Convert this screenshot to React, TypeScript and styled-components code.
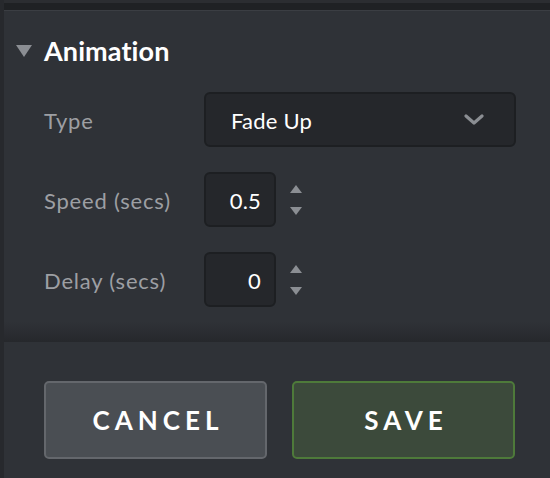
import React from "react";
import styled, { createGlobalStyle } from "styled-components";

const GlobalStyle = createGlobalStyle`
  html, body {
    margin: 0;
    padding: 0;
    background: #2f3237;
    font-family: Lato, "Open Sans", "Liberation Sans", sans-serif;
  }
`;

const Page = styled.div`
  display: flex;
  width: 550px;
  height: 478px;
  overflow: hidden;
  background: #2f3237;
`;

const SideStrip = styled.div`
  width: 4px;
  flex: none;
  background: #27292d;
`;

const Main = styled.div`
  flex: 1;
  display: flex;
  flex-direction: column;
`;

const TopBar = styled.div`
  height: 11px;
  flex: none;
  background: linear-gradient(
    to bottom,
    #2b2d31 0px,
    #2b2d31 3px,
    #1f2124 3px,
    #1f2124 10px,
    #3b3e43 10px
  );
`;

const Section = styled.section`
  padding: 24px 34px 15px 12px;
`;

const Header = styled.div`
  display: flex;
  align-items: center;
  height: 30px;
  gap: 12px;
`;

const Caret = styled.span`
  width: 0;
  height: 0;
  border-left: 8px solid transparent;
  border-right: 8px solid transparent;
  border-top: 12px solid #8b8e93;
  margin-top: 2px;
`;

const Title = styled.h2`
  margin: 0;
  color: #ffffff;
  font-size: 27px;
  font-weight: 700;
  letter-spacing: 0.1px;
`;

const Form = styled.div`
  display: grid;
  grid-template-columns: 160px 1fr;
  row-gap: 25px;
  margin-top: 27px;
  padding-left: 28px;
`;

const Label = styled.label`
  display: flex;
  align-items: center;
  box-sizing: border-box;
  height: 55px;
  padding-top: 2px;
  color: #9d9fa3;
  font-size: 22px;
  letter-spacing: 0.8px;
`;

const Field = styled.div`
  display: flex;
  align-items: center;
  height: 55px;
`;

const Box = styled.div<{ $wide?: boolean }>`
  box-sizing: border-box;
  height: 55px;
  width: ${(p) => (p.$wide ? "312px" : "72px")};
  display: flex;
  align-items: center;
  justify-content: ${(p) => (p.$wide ? "space-between" : "flex-end")};
  padding: ${(p) => (p.$wide ? "2px 30px 0 25px" : "2px 13px 0 0")};
  background: #25272b;
  border: 2px solid #1d1f22;
  border-radius: 6px;
  color: #ffffff;
  font-size: 22px;
  letter-spacing: 0.2px;

  svg {
    margin-top: -2px;
  }
`;

const Spinner = styled.div`
  display: flex;
  flex-direction: column;
  gap: 14px;
  margin-left: 14px;
`;

const Arrow = styled.span<{ $down?: boolean }>`
  width: 0;
  height: 0;
  border-left: 6px solid transparent;
  border-right: 6px solid transparent;
  ${(p) =>
    p.$down
      ? "border-top: 8px solid #8b8e93;"
      : "border-bottom: 8px solid #8b8e93;"}
`;

const Divider = styled.div`
  height: 20px;
  flex: none;
  background: linear-gradient(to bottom, #2f3237, #26282c);
`;

const Footer = styled.div`
  display: flex;
  gap: 25px;
  padding: 39px 35px 0 40px;
`;

const Button = styled.button<{ $primary?: boolean }>`
  box-sizing: border-box;
  width: 223px;
  height: 78px;
  border-radius: 5px;
  border: 2px solid ${(p) => (p.$primary ? "#4e7a3a" : "#64676c")};
  background: ${(p) => (p.$primary ? "#3c4a3b" : "#4a4e53")};
  color: #ffffff;
  font-family: Lato, "Open Sans", "Liberation Sans", sans-serif;
  font-weight: 700;
  font-size: 26px;
  letter-spacing: 5px;
  padding: 0 0 0 5px;
  cursor: pointer;
`;

const Chevron = () => (
  <svg width="20" height="14" viewBox="0 0 20 14">
    <polyline
      points="2,3 10,10 18,3"
      fill="none"
      stroke="#8b8e93"
      strokeWidth="3.2"
      strokeLinecap="round"
      strokeLinejoin="round"
    />
  </svg>
);

const NumberField = ({ value }: { value: string }) => (
  <Field>
    <Box>{value}</Box>
    <Spinner>
      <Arrow />
      <Arrow $down />
    </Spinner>
  </Field>
);

export default function App() {
  return (
    <Page>
      <GlobalStyle />
      <SideStrip />
      <Main>
        <TopBar />
        <Section>
          <Header>
            <Caret />
            <Title>Animation</Title>
          </Header>
          <Form>
            <Label>Type</Label>
            <Field>
              <Box $wide>
                <span>Fade Up</span>
                <Chevron />
              </Box>
            </Field>
            <Label>Speed (secs)</Label>
            <NumberField value="0.5" />
            <Label>Delay (secs)</Label>
            <NumberField value="0" />
          </Form>
        </Section>
        <Divider />
        <Footer>
          <Button>CANCEL</Button>
          <Button $primary>SAVE</Button>
        </Footer>
      </Main>
    </Page>
  );
}
